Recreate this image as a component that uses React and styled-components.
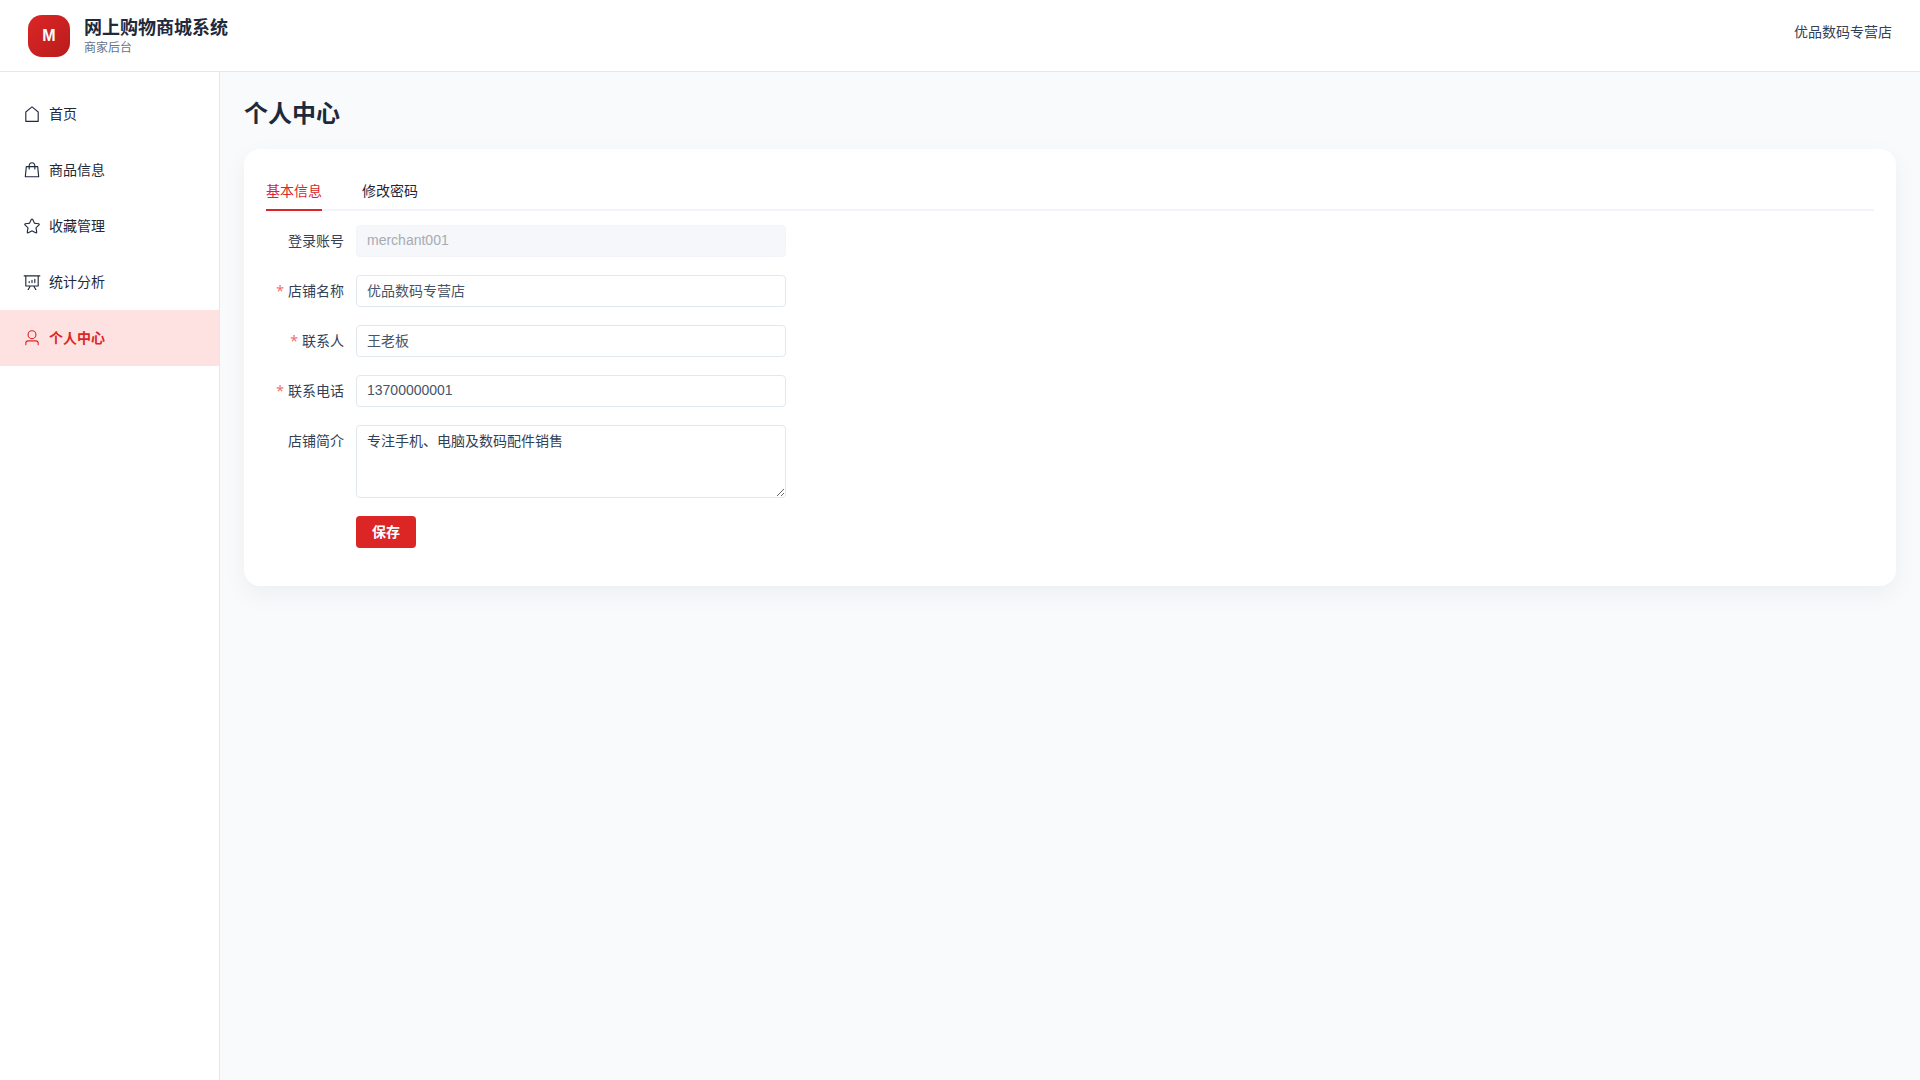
import React, {useState} from "react";
import styled, {createGlobalStyle} from "styled-components";

const GlobalStyle = createGlobalStyle`
  * {
    box-sizing: border-box;
  }

  body {
    margin: 0;
    background-color: #f8fafc;
    color: #1e293b;
    font-family: "Liberation Sans", "Noto Sans CJK SC", sans-serif;
    font-size: 14px;
    line-height: 20px;
  }

  button, input, textarea {
    font-family: inherit;
    font-size: inherit;
  }
`;

const Page = styled.div`
  min-height: 100vh;
  display: flex;
  flex-direction: column;
`;

const Header = styled.header`
  height: 72px;
  padding: 0 28px;
  display: flex;
  align-items: center;
  justify-content: space-between;
  background-color: white;
  border-bottom: 1px solid #e2e8f0;
`;

const Brand = styled.div`
  display: flex;
  align-items: center;
  gap: 14px;
`;

const Logo = styled.div`
  width: 42px;
  height: 42px;
  border-radius: 14px;
  display: flex;
  align-items: center;
  justify-content: center;
  background: linear-gradient(135deg, #dc2626, #b91c1c);
  color: white;
  font-size: 16px;
  font-weight: bold;
`;

const BrandName = styled.div`
  font-size: 18px;
  line-height: 24px;
  font-weight: bold;
`;

const BrandNote = styled.div`
  font-size: 12px;
  line-height: 16px;
  color: #64748b;
`;

const ShopName = styled.div`
  padding-bottom: 8px;
  color: #334155;
`;

const Body = styled.div`
  flex: 1;
  display: flex;
`;

const Sidebar = styled.nav`
  width: 220px;
  flex-shrink: 0;
  padding-top: 14px;
  background-color: white;
  border-right: 1px solid #e2e8f0;
`;

const NavLink = styled.a`
  height: 56px;
  padding: 0 23px;
  display: flex;
  align-items: center;
  gap: 8px;
  text-decoration: none;
  color: ${ props => props.$active ? '#dc2626' : '#1e293b'};
  background-color: ${ props => props.$active ? '#fee2e2' : 'transparent'};
  font-weight: ${ props => props.$active ? 'bold' : 'normal'};
`;

const Icon = styled.svg`
  width: 18px;
  height: 18px;
  fill: currentColor;
`;

const Main = styled.main`
  flex: 1;
  min-width: 0;
  padding: 24px;
`;

const Title = styled.h1`
  margin: 0 0 17px;
  font-size: 24px;
  line-height: 36px;
`;

const Card = styled.section`
  padding: 22px 22px 20px;
  border-radius: 16px;
  background-color: white;
  box-shadow: 0 8px 24px rgba(15, 23, 42, .05);
`;

const Tabs = styled.div`
  display: flex;
  gap: 40px;
  margin-bottom: 14px;
  box-shadow: inset 0 -2px #f1f5f9;
`;

const Tab = styled.button`
  height: 40px;
  padding: 0;
  border: 0;
  border-bottom: 2px solid ${ props => props.$active ? '#dc2626' : 'transparent'};
  background: none;
  color: ${ props => props.$active ? '#dc2626' : '#1e293b'};
  cursor: pointer;
`;

const Form = styled.form`
  max-width: 520px;
`;

const FormItem = styled.div`
  display: flex;
  margin-bottom: 18px;
`;

const Label = styled.label`
  width: 90px;
  flex-shrink: 0;
  padding-right: 12px;
  line-height: 32px;
  text-align: right;
  color: #334155;
`;

const Required = styled.span`
  margin-right: 4px;
  font-family: "Noto Sans", sans-serif;
  line-height: 20px;
  color: #f56c6c;
`;

const Input = styled.input`
  flex: 1;
  min-width: 0;
  height: 32px;
  padding: 0 10px 2px;
  border: 1px solid #e2e8f0;
  border-radius: 4px;
  background-color: white;
  color: #475569;

  &:disabled {
    border-color: #f1f5f9;
    background-color: #f5f7fa;
    color: #a8abb2;
  }
`;

const TextArea = styled.textarea`
  flex: 1;
  min-width: 0;
  height: 73px;
  padding: 5px 10px;
  border: 1px solid #e2e8f0;
  border-radius: 4px;
  line-height: 20px;
  color: #334155;
  resize: vertical;
`;

const SaveButton = styled.button`
  height: 32px;
  margin-left: 90px;
  padding: 0 16px 2px;
  border: 0;
  border-radius: 4px;
  background-color: #dc2626;
  color: white;
  font-weight: bold;
  cursor: pointer;
`;

const navItems = [
  {
    label: '首页',
    path: 'M192 413.952V896h640V413.952L512 147.328zM139.52 374.4l352-293.312a32 32 0 0 1 40.96 0l352 293.312A32 32 0 0 1 896 398.976V928a32 32 0 0 1-32 32H160a32 32 0 0 1-32-32V398.976a32 32 0 0 1 11.52-24.576',
  },
  {
    label: '商品信息',
    path: 'M320 288v-22.336C320 154.688 405.504 64 512 64s192 90.688 192 201.664v22.4h131.072a32 32 0 0 1 31.808 28.8l57.6 576a32 32 0 0 1-31.808 35.2H131.328a32 32 0 0 1-31.808-35.2l57.6-576a32 32 0 0 1 31.808-28.8H320zm64 0h256v-22.336C640 189.248 582.272 128 512 128c-70.272 0-128 61.248-128 137.664v22.4zm-64 64H217.92l-51.2 512h690.56l-51.264-512H704v96a32 32 0 1 1-64 0v-96H384v96a32 32 0 0 1-64 0z',
  },
  {
    label: '收藏管理',
    path: 'm512 747.84 228.16 119.936a6.4 6.4 0 0 0 9.28-6.72l-43.52-254.08 184.512-179.904a6.4 6.4 0 0 0-3.52-10.88l-255.104-37.12L517.76 147.904a6.4 6.4 0 0 0-11.52 0L392.192 379.072l-255.104 37.12a6.4 6.4 0 0 0-3.52 10.88L318.08 606.976l-43.584 254.08a6.4 6.4 0 0 0 9.28 6.72zM313.6 924.48a70.4 70.4 0 0 1-102.144-74.24l37.888-220.928L88.96 472.96A70.4 70.4 0 0 1 128 352.896l221.76-32.256 99.2-200.96a70.4 70.4 0 0 1 126.208 0l99.2 200.96 221.824 32.256a70.4 70.4 0 0 1 39.04 120.064L774.72 629.376l37.888 220.928a70.4 70.4 0 0 1-102.144 74.24L512 820.096l-198.4 104.32z',
  },
  {
    label: '统计分析',
    path: 'm665.216 768 110.848 192h-73.856L591.36 768H433.024L322.176 960H248.32l110.848-192H160a32 32 0 0 1-32-32V192H64a32 32 0 0 1 0-64h896a32 32 0 1 1 0 64h-64v544a32 32 0 0 1-32 32zM832 192H192v512h640zM352 448a32 32 0 0 1 32 32v64a32 32 0 0 1-64 0v-64a32 32 0 0 1 32-32m160-64a32 32 0 0 1 32 32v128a32 32 0 0 1-64 0V416a32 32 0 0 1 32-32m160-64a32 32 0 0 1 32 32v192a32 32 0 1 1-64 0V352a32 32 0 0 1 32-32',
  },
  {
    label: '个人中心',
    path: 'M512 512a192 192 0 1 0 0-384 192 192 0 0 0 0 384m0 64a256 256 0 1 1 0-512 256 256 0 0 1 0 512m320 320v-96a96 96 0 0 0-96-96H288a96 96 0 0 0-96 96v96a32 32 0 1 1-64 0v-96a160 160 0 0 1 160-160h448a160 160 0 0 1 160 160v96a32 32 0 1 1-64 0',
  },
];

const tabs = ['基本信息', '修改密码'];

const fields = [
  {id: 'account', label: '登录账号', value: 'merchant001', disabled: true},
  {id: 'shop', label: '店铺名称', value: '优品数码专营店', required: true},
  {id: 'contact', label: '联系人', value: '王老板', required: true},
  {id: 'phone', label: '联系电话', value: '13700000001', required: true},
];

const ProfileForm = () => (
  <Form onSubmit={e => e.preventDefault()}>
    {fields.map(field => (
      <FormItem key={field.id}>
        <Label htmlFor={field.id}>
          {field.required && <Required>*</Required>}
          {field.label}
        </Label>
        <Input id={field.id} defaultValue={field.value} disabled={field.disabled} />
      </FormItem>
    ))}
    <FormItem>
      <Label htmlFor="intro">店铺简介</Label>
      <TextArea id="intro" defaultValue="专注手机、电脑及数码配件销售" />
    </FormItem>
    <FormItem>
      <SaveButton type="submit">保存</SaveButton>
    </FormItem>
  </Form>
);

const App = () => {
  const [currentNav, setNav] = useState('个人中心');
  const [currentTab, setTab] = useState(tabs[0]);
  return (
    <Page>
      <GlobalStyle />
      <Header>
        <Brand>
          <Logo>M</Logo>
          <div>
            <BrandName>网上购物商城系统</BrandName>
            <BrandNote>商家后台</BrandNote>
          </div>
        </Brand>
        <ShopName>优品数码专营店</ShopName>
      </Header>
      <Body>
        <Sidebar>
          {navItems.map(item => (
            <NavLink
              key={item.label}
              href="#"
              $active={item.label === currentNav}
              onClick={() => setNav(item.label)}
            >
              <Icon viewBox="0 0 1024 1024" aria-hidden="true"><path d={item.path} /></Icon>
              {item.label}
            </NavLink>
          ))}
        </Sidebar>
        <Main>
          <Title>个人中心</Title>
          <Card>
            <Tabs role="tablist">
              {tabs.map(tab => (
                <Tab
                  key={tab}
                  type="button"
                  role="tab"
                  aria-selected={tab === currentTab}
                  $active={tab === currentTab}
                  onClick={() => setTab(tab)}
                >
                  {tab}
                </Tab>
              ))}
            </Tabs>
            <ProfileForm />
          </Card>
        </Main>
      </Body>
    </Page>
  );
};

export default App
